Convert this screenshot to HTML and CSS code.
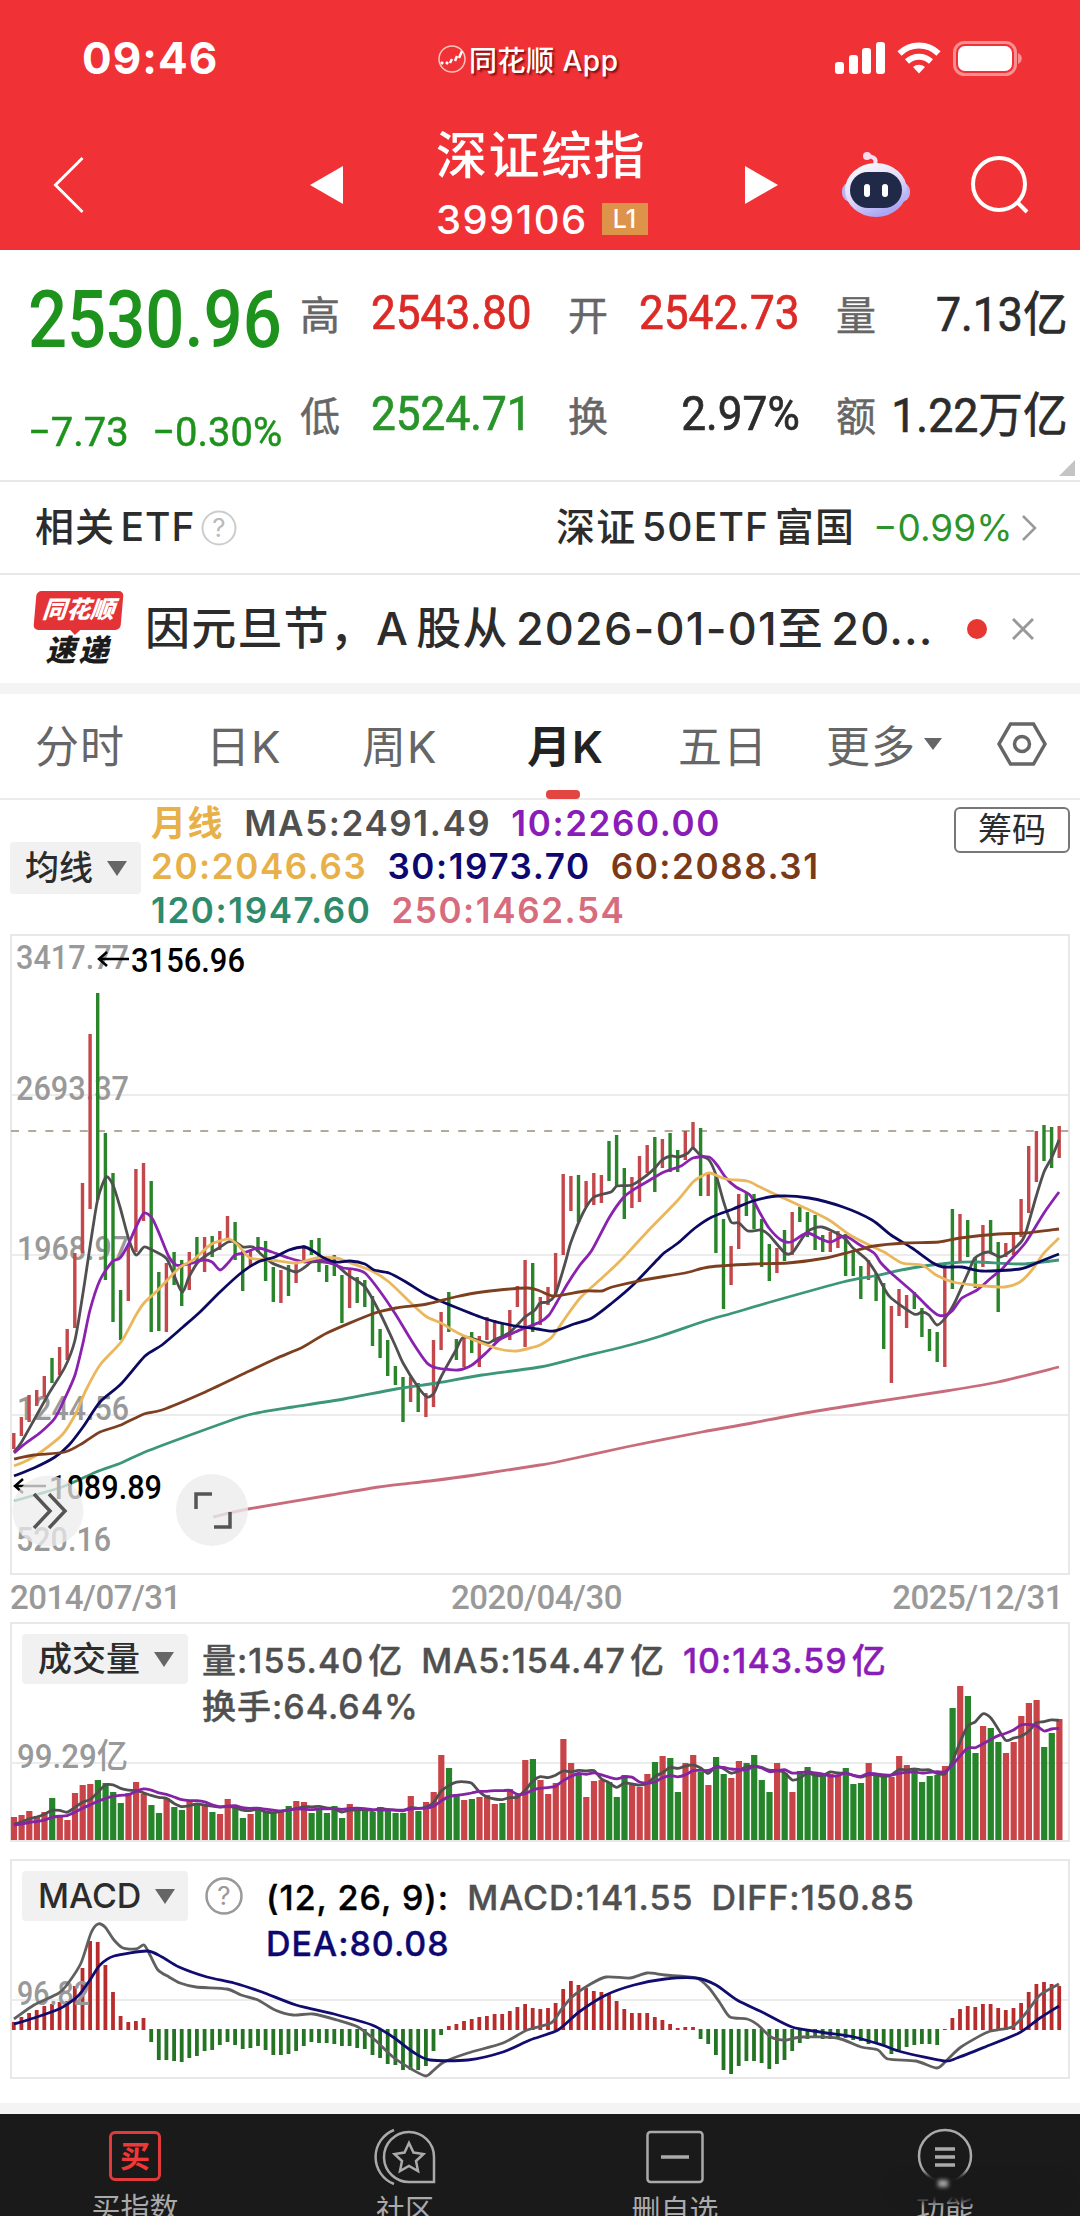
FILE: index.html
```html
<!DOCTYPE html>
<html lang="zh-CN">
<head>
    <meta charset="UTF-8">
    <meta name="viewport" content="width=device-width, initial-scale=1.0">
    <title>深证综指 399106</title>
    <link rel="stylesheet" href="styles.css">
</head>
<body>
    <header class="header">
        <div class="status">
            <span class="time">09:46</span>
            <div class="app-name">
                <svg width="30" height="30" viewBox="0 0 30 30" fill="none" stroke="#ffc4bd">
                    <circle cx="15" cy="15" r="13" stroke-width="1.500"/>
                    <path d="M4 18l2 2M9 18l2 2M13 19l2-4M18 17l2-5M22 14l3-7" stroke="#fff" stroke-width="2.500"/>
                </svg>
                <span>同花顺 App</span>
            </div>
            <div class="status-icons">
                <svg width="50" height="34" viewBox="0 0 50 34" fill="#fff">
                    <rect x="0" y="21" width="9" height="12" rx="3"/>
                    <rect x="14" y="14" width="9" height="19" rx="3"/>
                    <rect x="27" y="7" width="9" height="26" rx="3"/>
                    <rect x="41" y="1" width="9" height="32" rx="3"/>
                </svg>
                <svg width="44" height="34" viewBox="0 0 44 34" fill="none" stroke="#fff" stroke-width="6">
                    <path d="M2.500 12.500a28 28 0 0 1 39 0"/>
                    <path d="M10 20.500a17.500 17.500 0 0 1 24 0"/>
                    <path d="M22 32.500l-6-6.500a9 9 0 0 1 12 0z" fill="#fff" stroke="none"/>
                </svg>
                <svg width="70" height="35" viewBox="0 0 70 35">
                    <rect x="1.500" y="1.500" width="61" height="32" rx="10" fill="none" stroke="#f98f90" stroke-width="3"/>
                    <rect x="5" y="5" width="54" height="25" rx="7" fill="#fff"/>
                    <path d="M65 12c5 2 5 9 0 11z" fill="#f98f90"/>
                </svg>
            </div>
        </div>
        <nav class="navbar">
            <svg class="back" width="32" height="58" viewBox="0 0 32 60" fill="none" stroke="#fff" stroke-width="3"><path d="M30 2L2 30l28 28"/></svg>
            <svg class="prev" width="33" height="38" viewBox="0 0 33 38" fill="#fff"><path d="M0 19L33 0v38z"/></svg>
            <div class="title">
                <h1>深证综指</h1>
                <div class="code"><span>399106</span><b>L1</b></div>
            </div>
            <svg class="next" width="33" height="38" viewBox="0 0 33 38" fill="#fff"><path d="M33 19L0 0v38z"/></svg>
            <svg class="robot" width="70" height="66" viewBox="0 0 70 66">
                <defs>
                    <linearGradient id="shell" x1="0" y1="0" x2="0.500" y2="1">
                        <stop offset="0" stop-color="#fff"/>
                        <stop offset="0.600" stop-color="#e0d8f8"/>
                        <stop offset="1" stop-color="#aaa6f4"/>
                    </linearGradient>
                </defs>
                <path d="M34 12c2-5-1-7-7-8" fill="none" stroke="#f5dff0" stroke-width="4"/>
                <circle cx="26" cy="4" r="4" fill="#f8dcee"/>
                <rect x="1" y="30" width="68" height="20" rx="9" fill="#bbb4f2"/>
                <ellipse cx="35" cy="38" rx="31" ry="27" fill="url(#shell)"/>
                <rect x="9" y="20" width="52" height="36" rx="18" fill="#202948"/>
                <rect x="23" y="32" width="6" height="13" rx="3" fill="#fff"/>
                <rect x="41" y="32" width="6" height="13" rx="3" fill="#fff"/>
            </svg>
            <svg class="search" width="58" height="60" viewBox="0 0 58 60" fill="none" stroke="#fff" stroke-width="4"><circle cx="28" cy="29" r="26"/><path d="M46 47l10 10"/></svg>
        </nav>
    </header>

    <section class="quote">
        <div class="price">
            <div class="last"><span>2530.96</span></div>
            <div class="change"><span>−7.73</span><span>−0.30%</span></div>
        </div>
        <dl class="stats">
            <div class="stat"><dt>高</dt><dd class="up">2543.80</dd></div>
            <div class="stat"><dt>开</dt><dd class="up">2542.73</dd></div>
            <div class="stat wide"><dt>量</dt><dd>7.13亿</dd></div>
            <div class="stat"><dt>低</dt><dd class="down">2524.71</dd></div>
            <div class="stat"><dt>换</dt><dd>2.97%</dd></div>
            <div class="stat wide"><dt>额</dt><dd>1.22万亿</dd></div>
        </dl>
        <i class="corner"></i>
    </section>

    <section class="etf">
        <span class="etf-title">相关 ETF</span>
        <svg class="help" width="36" height="36" viewBox="0 0 36 36"><circle cx="18" cy="18" r="16.500" fill="none" stroke="#ccc" stroke-width="2"/><text x="18" y="27" text-anchor="middle">?</text></svg>
        <span class="etf-name">深证 50ETF 富国</span>
        <span class="etf-pct">−0.99%</span>
        <svg width="16" height="28" viewBox="0 0 16 28" fill="none" stroke="#999" stroke-width="2.500"><path d="M2 2l12 12L2 26"/></svg>
    </section>

    <section class="news">
        <div class="news-logo">
            <span class="logo-top">同花顺</span>
            <span class="logo-bottom">速递</span>
        </div>
        <p>因元旦节，A 股从 2026-01-01至 20...</p>
        <i class="dot"></i>
        <svg width="22" height="22" viewBox="0 0 22 22" stroke="#999" stroke-width="3"><path d="M1 1l20 20M21 1L1 21"/></svg>
    </section>

    <nav class="tabs">
        <span>分时</span>
        <span>日K</span>
        <span>周K</span>
        <span class="active">月K</span>
        <span>五日</span>
        <span class="more">更多<i class="tri small"></i></span>
        <svg width="50" height="44" viewBox="0 0 50 44" fill="none" stroke="#666" stroke-width="3.500"><path d="M13.500 2h23L48 22 36.500 42h-23L2 22z"/><circle cx="25" cy="22" r="7.500"/></svg>
    </nav>

    <section class="legend">
        <div class="select">均线<i class="tri"></i></div>
        <div class="ma-lines">
            <p><span class="c20 bold">月线</span><span class="c5">MA5:2491.49</span><span class="c10">10:2260.00</span></p>
            <p><span class="c20">20:2046.63</span><span class="c30">30:1973.70</span><span class="c60">60:2088.31</span></p>
            <p><span class="c120">120:1947.60</span><span class="c250">250:1462.54</span></p>
        </div>
        <button class="chips">筹码</button>
    </section>

    <section class="kline">
        <svg id="kline" width="1062" height="641" viewBox="9 934 1062 641"></svg>
    </section>
    <div class="dates"><span>2014/07/31</span><span>2020/04/30</span><span>2025/12/31</span></div>

    <section class="panel">
        <svg id="volume" class="plot" width="1062" height="220" viewBox="9 1622 1062 220"></svg>
        <div class="select">成交量<i class="tri"></i></div>
        <div class="values">
            <p><span class="c5">量:155.40<em>亿</em></span><span class="c5">MA5:154.47<em>亿</em></span><span class="c10">10:143.59<em>亿</em></span></p>
            <p><span class="c5">换手:64.64%</span></p>
        </div>
    </section>

    <section class="panel macd">
        <svg id="macd" class="plot" width="1062" height="220" viewBox="9 1859 1062 220"></svg>
        <div class="select">MACD<i class="tri"></i></div>
        <svg class="help dark" width="38" height="38" viewBox="0 0 38 38"><circle cx="19" cy="19" r="17.500" fill="none" stroke="#999" stroke-width="2.500"/><text x="19" y="28" text-anchor="middle">?</text></svg>
        <div class="values">
            <p><span class="black">(12, 26, 9):</span><span class="c5">MACD:141.55</span><span class="c5">DIFF:150.85</span></p>
            <p><span class="c30">DEA:80.08</span></p>
        </div>
    </section>

    <footer class="tabbar">
        <div class="tab t1">
            <div class="buy">买</div>
            <span>买指数</span>
        </div>
        <div class="tab t2">
            <svg width="62" height="58" viewBox="0 0 62 58" fill="none" stroke="#aaa" stroke-width="2.500"><path d="M20 2A29 29 0 0 0 20 56"/><path d="M60 54H36A25 25 0 1 1 60 29z"/><path d="M35 15l4.500 9.500 10 1.500-7.500 7 2 10-9-5-9 5 2-10-7.500-7 10-1.500z"/></svg>
            <span>社区</span>
        </div>
        <div class="tab t3">
            <svg width="58" height="58" viewBox="0 0 58 58" fill="none" stroke="#aaa" stroke-width="2.500"><rect x="1.500" y="4" width="55" height="50" rx="3"/><path d="M15 29h28" stroke-width="3.500"/></svg>
            <span>删自选</span>
        </div>
        <div class="tab t4">
            <svg width="58" height="58" viewBox="0 0 58 58" fill="none" stroke="#aaa" stroke-width="2.500"><circle cx="29" cy="28" r="26"/><path d="M19 21h20M19 29h20M19 37h20" stroke-width="3.500"/></svg>
            <span>功能</span>
        </div>
        <i class="smudge"></i>
        <i class="glint"></i>
    </footer>

    <script src="chart.js"></script>
</body>
</html>
```
FILE: styles.css
```css
* {
    box-sizing: border-box;
    margin: 0;
    padding: 0;
}
body {
    width: 1080px;
    height: 2216px;
    overflow: hidden;
    background: #fff;
    color: #2c2c2c;
    font-family: Inter, "Noto Sans CJK SC", sans-serif;
}
svg {
    display: block;
    flex: none;
}
i, em {
    font-style: normal;
}
span {
    white-space: nowrap;
}

/* header */
.header {
    height: 250px;
    background: #f03236;
    color: #fff;
}
.status {
    height: 116px;
    display: flex;
    align-items: center;
    padding: 0 57px 0 82px;
}
.time {
    width: 355px;
    font-size: 44px;
    font-weight: 700;
    letter-spacing: 1px;
}
.app-name {
    width: 398px;
    display: flex;
    align-items: center;
    gap: 2px;
    padding-top: 2px;
    font-size: 28px;
    font-weight: 500;
    text-shadow: 2px 2px 2px rgba(80, 0, 0, 0.7);
}
.app-name span {
    letter-spacing: 0.5px;
}
.status-icons {
    display: flex;
    align-items: center;
    gap: 12px;
}
.navbar {
    height: 134px;
    display: flex;
    align-items: center;
    padding: 4px 51px 0 53px;
}
.prev {
    margin-left: 225px;
}
.title {
    width: 220px;
    margin-left: 93px;
}
.title h1 {
    font-size: 51px;
    line-height: 66px;
    margin-top: -8px;
    letter-spacing: 1.5px;
    font-weight: 500;
    white-space: nowrap;
}
.code {
    display: flex;
    align-items: center;
    gap: 14px;
    height: 50px;
    padding-top: 10px;
    font-size: 40px;
    font-weight: 500;
    letter-spacing: 1.4px;
}
.code b {
    width: 46px;
    height: 32px;
    background: #de934a;
    font-size: 25px;
    line-height: 32px;
    font-weight: 500;
    letter-spacing: 0;
    text-align: center;
}
.next {
    margin-left: 90px;
}
.robot {
    margin-left: 63px;
}
.search {
    margin-left: 60px;
}

/* quote */
.quote {
    position: relative;
    display: flex;
    height: 232px;
    border-bottom: 2px solid #e8e8e8;
    font-family: Roboto, "Noto Sans CJK SC", sans-serif;
}
.price {
    width: 300px;
    padding: 20px 0 0 28px;
    color: #1d931d;
}
.last {
    height: 100px;
    font-size: 80px;
    line-height: 100px;
    font-weight: 500;
}
.last span {
    display: inline-block;
    transform: scaleX(0.86);
    transform-origin: left;
}
.change {
    display: flex;
    gap: 24px;
    width: 290px;
    margin-top: 36px;
    font-size: 41px;
    line-height: 52px;
    transform: scaleX(0.975);
    transform-origin: left;
    -webkit-text-stroke: 0.5px currentColor;
}
.stats {
    display: grid;
    grid-template-columns: 268px 268px 232px;
    grid-template-rows: 101px 101px;
    padding-top: 12px;
}
.stat {
    display: flex;
    align-items: center;
    justify-content: space-between;
    padding-right: 36px;
}
.stat.wide {
    padding-right: 0;
}
.stat dt {
    font-size: 40px;
    color: #666;
    -webkit-text-stroke: 0.5px currentColor;
}
.stat dd {
    font-size: 48px;
    transform: scaleX(0.92);
    transform-origin: right;
    white-space: nowrap;
    margin-left: -40px;
    font-weight: 400;
    -webkit-text-stroke: 0.7px currentColor;
}
.stat.wide dd {
    transform: translateY(-3px) scaleX(0.93);
}
.up {
    color: #dc2b27;
}
.down {
    color: #299429;
}
.corner {
    position: absolute;
    right: 5px;
    bottom: 4px;
    border-left: 16px solid transparent;
    border-bottom: 16px solid #c4c4c4;
}

/* etf */
.etf {
    height: 93px;
    display: flex;
    align-items: center;
    padding: 0 43px 0 35px;
    border-bottom: 2px solid #e8e8e8;
    font-size: 39px;
    font-weight: 500;
    line-height: 50px;
}
.etf-title {
    width: 166px;
    padding-bottom: 2px;
    letter-spacing: 1px;
    word-spacing: -6px;
}
.help text {
    font-size: 26px;
    font-weight: 400;
    fill: #bbb;
}
.help.dark text {
    fill: #999;
}
.etf-name {
    width: 317px;
    margin-left: 319px;
    padding-bottom: 2px;
    letter-spacing: 1.2px;
    word-spacing: -6px;
}
.etf-pct {
    width: 148px;
    font-size: 37px;
    font-weight: 400;
    color: #2c942c;
}

/* news */
.news {
    height: 119px;
    display: flex;
    align-items: center;
    padding-left: 35px;
    border-bottom: 11px solid #f4f4f4;
}
.news-logo {
    width: 87px;
    height: 76px;
    font-weight: 900;
    font-style: italic;
    text-align: center;
}
.logo-top {
    position: relative;
    display: block;
    height: 39px;
    border-radius: 5px;
    background: #e43337;
    color: #fff;
    font-size: 24px;
    line-height: 38px;
    transform: skewX(-5deg);
}
.logo-top::after {
    content: "";
    position: absolute;
    left: 36px;
    top: 38px;
    border: 6px solid transparent;
    border-top-color: #e43337;
    border-bottom: 0;
}
.logo-bottom {
    display: block;
    font-size: 30px;
    line-height: 40px;
    letter-spacing: 3px;
    color: #1c1c1c;
}
.news p {
    width: 810px;
    padding: 0 0 7px 23px;
    font-size: 45px;
    font-weight: 500;
    letter-spacing: 1.2px;
    word-spacing: -6px;
    white-space: nowrap;
}
.dot {
    width: 20px;
    height: 20px;
    margin: 0 25px 0 35px;
    border-radius: 50%;
    background: #e83631;
}

/* period tabs */
.tabs {
    height: 106px;
    display: grid;
    grid-template-columns: 171px 156px 165px 151px 148px 171px 50px;
    align-items: center;
    padding: 0 0 4px 35px;
    border-bottom: 2px solid #ebebeb;
    font-size: 44px;
    letter-spacing: 1px;
    color: #666;
}
.active {
    position: relative;
    font-weight: 600;
    color: #222;
}
.active::after {
    content: "";
    position: absolute;
    left: 19px;
    bottom: -23px;
    width: 34px;
    height: 9px;
    border-radius: 4px;
    background: #e34540;
}
.more {
    display: flex;
    align-items: center;
}
.tri {
    border: 10px solid transparent;
    border-top: 15px solid #666;
    border-bottom: 0;
}
.tri.small {
    border-width: 12px 9px 0;
    margin-left: 8px;
}

/* moving average legend */
.legend {
    height: 135px;
    display: flex;
    padding-left: 10px;
}
.select {
    position: relative;
    display: flex;
    align-items: center;
    gap: 14px;
    border-radius: 4px;
    background: #f1f1f1;
    font-size: 34px;
    font-weight: 500;
    line-height: 44px;
}
.legend .select {
    width: 131px;
    height: 52px;
    margin-top: 42px;
    padding-left: 15px;
}
.ma-lines {
    width: 813px;
    padding: 2px 0 0 10px;
    font-size: 35px;
    line-height: 43.3px;
    font-weight: 600;
    letter-spacing: 1.6px;
}
.ma-lines p {
    display: flex;
    gap: 20px;
}
.chips {
    width: 116px;
    height: 46px;
    margin-top: 7px;
    border: 2px solid #777;
    border-radius: 6px;
    background: #fff;
    color: #2c2c2c;
    font: 34px/36px "Noto Sans CJK SC", sans-serif;
    padding-bottom: 5px;
}
.bold {
    font-weight: 700;
}
.c5 { color: #505050; }
.c10 { color: #8a1cb8; }
.c20 { color: #e8b048; }
.c30 { color: #0c0870; }
.c60 { color: #7a3a18; }
.c120 { color: #2e8b6c; }
.c250 { color: #d66c7c; }
.black { color: #000; }

/* charts */
.kline {
    height: 641px;
    padding-left: 9px;
    margin-top: -1px;
}
.axis {
    font: 500 34px Roboto, "Noto Sans CJK SC", sans-serif;
    fill: #999;
}
.mark {
    font: 500 34px Roboto, sans-serif;
    fill: #000;
}
.dates {
    display: flex;
    justify-content: space-between;
    height: 47px;
    padding: 0 17px 0 10px;
    font: 500 33px/45px Roboto, sans-serif;
    color: #999;
    letter-spacing: -0.5px;
}
.panel {
    position: relative;
    display: flex;
    align-items: flex-start;
    height: 220px;
    margin: 0 9px;
    padding: 12px 0 0 13px;
}
.panel .select {
    width: 166px;
    height: 50px;
    padding-left: 16px;
}
.plot {
    position: absolute;
    left: 0;
    top: 0;
}
.values {
    position: relative;
    padding: 4px 0 0 14px;
    font-size: 34px;
    line-height: 46px;
    font-weight: 500;
    letter-spacing: 1px;
    -webkit-text-stroke: 0.4px currentColor;
}
.values p {
    display: flex;
    gap: 18px;
}
.values em {
    margin-left: 4px;
}
.macd {
    margin-top: 17px;
    margin-bottom: 24px;
}
.macd .help {
    position: relative;
    margin: 6px 0 0 17px;
}
.macd .values {
    padding-left: 23px;
}

/* bottom bar */
.tabbar {
    position: relative;
    height: 113px;
    display: flex;
    border-top: 11px solid #f4f4f4;
    background: #1a1a1a;
    color: #aaa;
    font-size: 29px;
}
.tab {
    width: 270px;
    display: flex;
    flex-direction: column;
    align-items: center;
    padding-top: 14px;
}
.tab span {
    line-height: 42px;
    margin-top: 4px;
}
.buy {
    width: 52px;
    height: 52px;
    margin: 3px 0;
    border: 3px solid #e03a3a;
    border-radius: 6px;
    color: #f03838;
    font-size: 30px;
    line-height: 44px;
    font-weight: 700;
    text-align: center;
}
.smudge {
    position: absolute;
    left: 890px;
    top: 60px;
    width: 180px;
    height: 28px;
    border-radius: 12px;
    background: #191919;
    filter: blur(3px);
}
.glint {
    position: absolute;
    left: 938px;
    top: 66px;
    width: 10px;
    height: 7px;
    background: #aaa;
    filter: blur(2px);
}
```
FILE: chart.js
```js
// monthly bars, 2014/07 - 2025/12: direction, high, low (plot coordinates)
const bars = `r1433,1449 r1417,1436 r1395,1422 r1390,1406 r1376,1397 g1358,1383 r1347,1375 r1329,1360 r1253,1328 r1183,1253
r1034,1209 g993,1200 g1133,1280 g1173,1322 g1290,1340 r1245,1301 r1169,1252 r1163,1221 g1181,1332 g1272,1331
r1263,1332 g1252,1285 g1260,1306 r1252,1290 g1237,1262 r1237,1272 g1236,1257 r1231,1250 r1216,1240 g1222,1260
g1250,1291 r1250,1267 g1237,1252 g1241,1281 g1267,1302 r1270,1303 g1265,1296 r1263,1283 r1245,1263 g1240,1255
g1238,1272 g1265,1282 g1255,1276 g1275,1323 r1270,1308 g1277,1303 g1280,1307 g1296,1346 g1329,1358 g1340,1376
g1366,1385 g1377,1422 r1377,1402 g1383,1412 r1393,1417 r1340,1407 r1312,1350 g1292,1332 g1339,1360 r1337,1367
g1332,1353 r1336,1367 r1317,1340 r1320,1342 g1323,1339 r1310,1340 r1286,1307 r1260,1347 g1263,1332 r1297,1325
r1287,1305 r1253,1297 r1174,1255 r1176,1211 g1175,1222 r1181,1207 r1173,1205 r1175,1203 g1141,1181 g1135,1187
g1168,1219 r1177,1208 r1156,1202 r1145,1173 g1137,1192 r1139,1168 g1133,1172 g1150,1172 r1131,1160 r1122,1148
g1128,1196 r1173,1196 g1176,1253 g1219,1309 r1246,1285 r1194,1249 g1192,1216 g1194,1229 g1219,1267 g1244,1281
r1248,1273 g1230,1261 r1212,1255 g1207,1222 g1212,1237 g1215,1250 g1235,1252 r1232,1252 r1231,1248 g1234,1276
g1250,1276 g1266,1299 r1260,1280 g1273,1301 g1283,1349 r1306,1383 r1289,1316 r1295,1328 g1292,1309 g1308,1337
g1329,1351 g1332,1362 r1263,1367 g1209,1289 r1214,1262 g1220,1257 g1257,1288 r1225,1267 g1220,1253 g1242,1312
r1243,1257 r1232,1255 r1199,1237 r1146,1213 r1131,1182 g1125,1161 g1127,1168 r1126,1158`.split(/\s+/).map(s => {
    const [high, low] = s.slice(1).split(',').map(Number);
    return { up: s[0] === 'r', high, low };
});

const volumes = [
    23, 25, 29, 24, 28, 42, 25, 20, 47, 55, 56, 60, 57, 48, 37, 47, 58, 46, 35, 27, 42, 33, 30, 39, 37, 35, 28, 26, 41, 32,
    22, 26, 33, 28, 28, 28, 34, 39, 38, 27, 30, 27, 34, 22, 36, 31, 30, 28, 33, 31, 27, 27, 44, 29, 38, 48, 85, 72, 46, 40,
    41, 43, 45, 36, 37, 51, 45, 80, 81, 60, 46, 57, 101, 77, 67, 43, 59, 60, 58, 43, 65, 55, 53, 66, 78, 84, 82, 48, 77, 85,
    68, 55, 83, 66, 62, 79, 77, 85, 60, 48, 77, 67, 48, 69, 73, 67, 65, 66, 64, 72, 56, 57, 77, 64, 64, 63, 84, 75, 70, 58,
    64, 65, 74, 132, 154, 144, 87, 114, 112, 98, 87, 98, 124, 137, 140, 93, 107, 121
];

const macd = [
    8, 13, 17, 20, 24, 26, 28, 29, 44, 62, 89, 88, 65, 38, 14, 8, 9, 12, -13, -31, -31, -32, -33, -29, -27, -22, -21, -16, -13, -16,
    -20, -19, -17, -21, -26, -26, -25, -22, -17, -13, -14, -14, -15, -17, -17, -19, -20, -26, -29, -35, -36, -41, -41, -41, -37, -22, -6,
    4, 6, 9, 11, 13, 14, 16, 16, 19, 23, 26, 22, 21, 22, 27, 41, 49, 45, 42, 39, 38, 36, 29, 21, 17, 17, 17, 13, 10, 6, 2, 3, 3,
    -10, -15, -26, -41, -45, -37, -32, -32, -34, -40, -35, -31, -22, -14, -10, -9, -10, -10, -10, -9, -11, -12, -15, -15, -17, -25,
    -21, -18, -16, -15, -15, -16, 1, 12, 21, 24, 23, 26, 26, 22, 20, 22, 27, 38, 46, 48, 46, 44
];

const lines = {
    ma120: ['#3c9678', '14,1501 62,1487 96,1472 121,1463 145,1452 193,1434 241,1417 262,1412 293,1407 344,1399 396,1389 437,1383 482,1375 540,1367 581,1357 630,1345 661,1336 705,1321 733,1313 774,1301 843,1282 874,1276 912,1268 950,1263 977,1262 1022,1264 1059,1260'],
    ma250: ['#c86c7c', '213,1517 248,1509 331,1495 379,1487 430,1481 475,1475 540,1465 557,1462 626,1447 702,1432 747,1424 805,1413 867,1403 946,1391 998,1382 1059,1367'],
    ma5: ['#505050', '14,1452 21,1443 34,1420 48,1395 65,1367 75,1340 83,1293 88,1260 93,1227 98,1198 106,1177 113,1185 120,1207 129,1240 136,1255 144,1247 152,1250 166,1258 172,1270 182,1292 189,1277 198,1262 207,1255 219,1248 228,1242 235,1242 243,1247 253,1247 262,1255 272,1263 282,1267 296,1272 305,1267 312,1262 324,1262 336,1265 348,1275 365,1287 380,1313 395,1345 403,1363 418,1387 427,1397 434,1393 441,1377 456,1350 464,1337 487,1343 494,1340 510,1332 525,1317 535,1310 540,1303 548,1302 555,1295 561,1277 566,1260 571,1242 583,1213 594,1197 611,1192 617,1186 632,1185 647,1175 655,1168 662,1160 671,1156 679,1157 688,1153 693,1148 700,1155 709,1160 716,1175 724,1203 731,1222 739,1223 748,1231 761,1230 769,1235 785,1253 793,1252 807,1232 822,1227 843,1237 853,1248 867,1260 876,1273 884,1288 891,1298 914,1314 922,1312 929,1315 937,1325 946,1317 955,1302 968,1273 975,1258 988,1252 1000,1257 1008,1253 1021,1242 1026,1232 1036,1197 1044,1172 1052,1157 1059,1140'],
    ma10: ['#8a22b0', '14,1453 26,1443 41,1432 55,1418 65,1398 75,1375 83,1343 90,1310 100,1280 112,1262 120,1258 128,1245 136,1227 144,1213 152,1218 159,1233 169,1257 176,1265 183,1265 193,1263 203,1260 212,1262 220,1270 228,1263 235,1255 244,1253 258,1248 272,1252 289,1258 305,1262 317,1260 331,1263 343,1268 353,1269 365,1273 379,1290 396,1315 413,1343 427,1363 437,1368 458,1370 472,1365 487,1352 499,1340 513,1333 525,1328 540,1322 549,1315 557,1302 568,1283 580,1265 592,1250 609,1218 623,1198 633,1190 650,1180 664,1172 681,1166 693,1158 709,1157 717,1165 726,1178 736,1187 750,1195 760,1213 769,1228 781,1240 791,1242 807,1233 821,1239 831,1242 845,1236 860,1245 874,1253 881,1263 891,1273 914,1293 929,1308 938,1315 946,1315 953,1310 962,1298 977,1290 991,1278 1001,1270 1010,1260 1026,1242 1044,1213 1059,1192'],
    ma20: ['#eab75c', '14,1466 28,1460 41,1452 62,1435 75,1415 86,1390 100,1365 121,1342 136,1315 144,1303 158,1290 179,1268 193,1260 210,1245 220,1241 229,1239 238,1245 250,1258 272,1260 296,1263 317,1258 336,1258 348,1262 372,1271 389,1282 413,1305 427,1317 441,1323 458,1333 479,1342 499,1349 517,1351 534,1347 540,1345 552,1337 566,1317 581,1297 602,1278 621,1260 647,1232 678,1200 693,1182 702,1176 710,1173 726,1179 747,1181 760,1187 781,1197 805,1208 829,1220 850,1235 867,1244 884,1252 902,1263 922,1265 936,1275 953,1282 974,1285 1005,1287 1020,1282 1032,1270 1044,1253 1059,1238'],
    ma30: ['#0c0a60', '14,1476 34,1468 55,1457 69,1445 83,1427 100,1402 121,1384 145,1356 162,1345 183,1327 200,1312 220,1292 241,1273 258,1262 275,1257 289,1250 304,1247 313,1251 324,1258 336,1262 350,1261 365,1264 374,1270 389,1273 406,1282 427,1295 455,1307 486,1319 510,1325 537,1329 554,1331 574,1324 592,1318 612,1303 633,1285 657,1260 664,1253 678,1243 695,1228 712,1217 733,1209 753,1201 778,1196 809,1198 843,1207 872,1220 891,1235 912,1248 933,1263 943,1267 962,1267 982,1271 1020,1269 1039,1262 1059,1254'],
    ma60: ['#7c4020', '14,1459 34,1455 65,1452 83,1443 100,1432 121,1425 144,1414 162,1410 203,1393 241,1375 275,1359 303,1347 327,1333 372,1314 396,1308 427,1304 455,1297 482,1292 527,1288 540,1291 554,1296 585,1291 602,1291 612,1287 643,1280 685,1273 709,1267 753,1264 788,1263 826,1258 850,1252 874,1246 905,1243 939,1242 960,1238 998,1234 1026,1233 1059,1229']
};
const diff = '14,2019 34,2005 59,1993 69,1982 81,1963 91,1933 98,1924 105,1927 114,1940 123,1948 136,1949 144,1945 150,1955 158,1970 169,1977 180,1983 196,1987 227,1989 241,1995 258,2000 275,2010 293,2015 313,2014 337,2020 358,2027 375,2040 393,2057 413,2070 426,2076 434,2070 444,2062 468,2053 503,2043 527,2030 551,2023 561,2010 572,1997 589,1985 606,1977 630,1978 647,1973 665,1975 696,1978 709,1988 720,2003 730,2017 747,2019 758,2025 771,2037 785,2040 802,2037 837,2038 861,2047 878,2050 888,2059 916,2061 937,2068 947,2060 961,2047 988,2032 1012,2027 1026,2013 1040,1995 1059,1984';
const dea = '14,2024 34,2018 59,2009 69,2003 79,1995 90,1980 100,1965 114,1956 147,1951 162,1957 179,1967 207,1977 234,1983 262,1992 296,2005 334,2014 372,2025 393,2037 413,2052 430,2060 468,2060 503,2052 530,2040 558,2030 579,2012 606,1995 634,1985 665,1979 696,1978 716,1985 737,2000 764,2013 792,2027 820,2032 854,2037 882,2045 902,2052 944,2061 957,2058 985,2047 1019,2033 1040,2018 1059,2006';

const RED = '#c4474c';
const GREEN = '#2a842a';
const x = i => 13.8 + i * 7.631;
const rect = (x, y, w, h, fill) => `<rect x="${x.toFixed(1)}" y="${y}" width="${w}" height="${h}" fill="${fill}"/>`;
const hline = y => `<path d="M11 ${y}H1068" stroke="#ececec" stroke-width="2"/>`;
const frame = (y, h) => `<rect x="11" y="${y}" width="1058" height="${h}" fill="none" stroke="#e8e8e8" stroke-width="2"/>`;
const label = (x, y, w, text, cls = 'axis') => `<text class="${cls}" x="${x}" y="${y}" textLength="${w}" lengthAdjust="spacingAndGlyphs">${text}</text>`;

// smooth line through the points
function curve(points, color, width = 2.8) {
    const p = points.split(' ').map(s => s.split(',').map(Number));
    let d = `M${p[0]}`;
    for (let i = 0; i < p.length - 1; i++) {
        const a = p[i - 1] || p[i], b = p[i], c = p[i + 1], e = p[i + 2] || c;
        d += `C${b[0] + (c[0] - a[0]) / 8},${b[1] + (c[1] - a[1]) / 8} ${c[0] - (e[0] - b[0]) / 8},${c[1] - (e[1] - b[1]) / 8} ${c}`;
    }
    return `<path d="${d}" fill="none" stroke="${color}" stroke-width="${width}"/>`;
}

function average(data, n) {
    return data.map((v, i) => {
        let sum = 0;
        for (let k = i - n + 1; k <= i; k++) sum += k < 0 ? 14 : data[k];
        return `${x(i).toFixed(1)},${(1840 - sum / n).toFixed(1)}`;
    }).join(' ');
}

let out = frame(935, 639) + hline(1095) + hline(1255) + hline(1415);
out += '<path d="M11 1131H1069" stroke="#b5aa98" stroke-width="2" stroke-dasharray="8 9.2"/>';
out += label(16, 969, 113, '3417.77') + label(16, 1100, 113, '2693.37') + label(17, 1260, 112, '1968.97') + label(17, 1420, 112, '1244.56') + label(16, 1551, 95, '520.16');
bars.forEach((b, i) => out += rect(x(i) - 1.7, b.high, 3.4, b.low - b.high, b.up ? RED : GREEN));
for (const key in lines) out += curve(lines[key][1], lines[key][0]);
out += label(131, 972, 114, '3156.96', 'mark') + label(49, 1499, 113, '1089.89', 'mark');
out += '<path d="M129 959H100M107 952l-8 7 8 7M46 1486H16M23 1479l-8 7 8 7" fill="none" stroke="#000" stroke-width="2.500"/>';
out += '<circle cx="48" cy="1511" r="35.500" fill="#ececec" fill-opacity=".75"/><circle cx="212" cy="1510" r="36" fill="#ececec" fill-opacity=".8"/>';
out += '<path d="M34 1494l16 17-16 17M49 1494l16 17-16 17M196 1509v-15h16M214 1527h16v-15" fill="none" stroke="#555" stroke-width="3.500"/>';
document.getElementById('kline').innerHTML = out;

out = frame(1623, 218) + hline(1763);
volumes.forEach((v, i) => out += rect(x(i) - 2.9, 1840 - v, 6.2, v, bars[i].up ? '#c94448' : '#26842a'));
out += label(17, 1768, 111, '99.29亿') + curve(average(volumes, 5), '#505050') + curve(average(volumes, 10), '#8424a4');
document.getElementById('volume').innerHTML = out;

out = frame(1860, 218) + hline(2000);
macd.forEach((v, i) => out += rect(x(i) - 1.9, v > 0 ? 2030 - v : 2029, 3.8, Math.abs(v), v > 0 ? '#b82c2c' : '#247424'));
out += label(17, 2005, 73, '96.82') + curve(diff, '#606060') + curve(dea, '#100c70');
document.getElementById('macd').innerHTML = out;
```
